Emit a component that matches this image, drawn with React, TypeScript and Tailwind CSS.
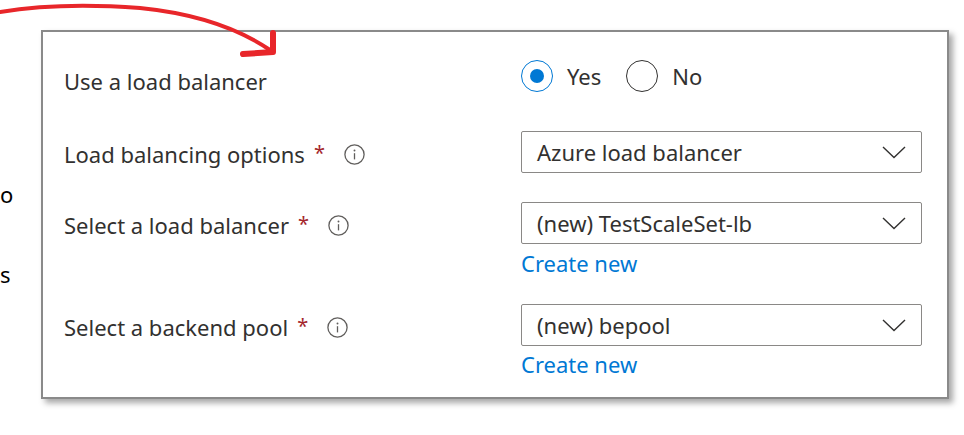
import React from 'react';

const font = { fontFamily: '"Noto Sans", "Open Sans", sans-serif' };

const InfoIcon = () => (
  <svg width="21" height="21" viewBox="0 0 21 21" className="shrink-0">
    <circle cx="10.5" cy="10.5" r="9.6" fill="none" stroke="#605e5c" strokeWidth="1.3" />
    <circle cx="10.5" cy="6.5" r="0.95" fill="#605e5c" />
    <line x1="10.5" y1="9.2" x2="10.5" y2="15.4" stroke="#605e5c" strokeWidth="1.3" />
  </svg>
);

const Chevron = () => (
  <svg width="24" height="13" viewBox="0 0 24 13" className="shrink-0">
    <polyline points="1,1 12,11.5 23,1" fill="none" stroke="#323130" strokeWidth="1.4" />
  </svg>
);

const Label = ({ text }: { text: string }) => (
  <div className="w-[457px] flex items-center h-[42px] mt-[2px] text-[22px] text-[#323130]">
    <span>{text}</span>
    <span className="text-[#a4262c] ml-[9px] -mt-[2px] text-[20px]">*</span>
    <span className="ml-[19px]">
      <InfoIcon />
    </span>
  </div>
);

const Dropdown = ({ value }: { value: string }) => (
  <div className="w-[401px] h-[42px] border border-[#8a8886] rounded-[2px] flex items-center justify-between pl-[15px] pr-[15px] text-[22px] text-[#323130]">
    <span>{value}</span>
    <Chevron />
  </div>
);

const Radio = ({ label, checked }: { label: string; checked?: boolean }) => (
  <div className="flex items-center">
    <div
      className={`w-[32px] h-[32px] rounded-full flex items-center justify-center border-[1.5px] ${
        checked ? 'border-[#0078d4]' : 'border-[#323130]'
      }`}
    >
      {checked && <div className="w-[14px] h-[14px] rounded-full bg-[#0078d4]" />}
    </div>
    <span className="ml-[14px] text-[22px] text-[#323130]">{label}</span>
  </div>
);

const CreateNew = ({ mt }: { mt: string }) => (
  <div className={`${mt} text-[22px] leading-[24px] text-[#0078d4]`}>Create new</div>
);

export default function App() {
  return (
    <div className="relative w-[964px] h-[435px] bg-white overflow-hidden" style={font}>
      <div className="flex">
        {/* ends of lines from the page behind the panel */}
        <div className="w-[41px] text-[22px] text-black leading-[30px] shrink-0">
          <div className="mt-[179px]">o</div>
          <div className="mt-[50px]">s</div>
        </div>

        <div className="mt-[30px] w-[908px] h-[369px] border-2 border-[#8a8a8a] bg-white shadow-[4px_4px_6px_rgba(0,0,0,0.35)] pl-[21px] pt-[24px]">
          {/* Use a load balancer */}
          <div className="flex items-start">
            <div className="w-[457px] h-[40px] leading-[40px] mt-[5px] text-[22px] text-[#323130]">
              Use a load balancer
            </div>
            <div className="flex items-center h-[40px] gap-[25px]">
              <Radio label="Yes" checked />
              <Radio label="No" />
            </div>
          </div>

          {/* Load balancing options */}
          <div className="flex items-start mt-[30px]">
            <Label text="Load balancing options" />
            <Dropdown value="Azure load balancer" />
          </div>

          {/* Select a load balancer */}
          <div className="flex items-start mt-[27px]">
            <Label text="Select a load balancer" />
            <div>
              <Dropdown value="(new) TestScaleSet-lb" />
              <CreateNew mt="mt-[7px]" />
            </div>
          </div>

          {/* Select a backend pool */}
          <div className="flex items-start mt-[29px]">
            <Label text="Select a backend pool" />
            <div>
              <Dropdown value="(new) bepool" />
              <CreateNew mt="mt-[6px]" />
            </div>
          </div>
        </div>
      </div>

      {/* hand-drawn annotation arrow */}
      <svg className="absolute left-0 top-0 pointer-events-none" width="300" height="64" viewBox="0 0 300 64">
        <path
          d="M0 12 Q 60 2 140 8 Q 220 16 270 50"
          fill="none"
          stroke="#e8262a"
          strokeWidth="4"
          strokeLinecap="round"
        />
        <path
          d="M273 33 L273 52 L243 54"
          fill="none"
          stroke="#e8262a"
          strokeWidth="6"
          strokeLinecap="round"
          strokeLinejoin="round"
        />
      </svg>
    </div>
  );
}
